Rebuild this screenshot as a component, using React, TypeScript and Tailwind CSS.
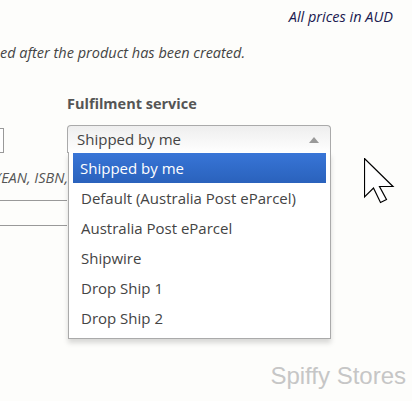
const options = [
  "Shipped by me",
  "Default (Australia Post eParcel)",
  "Australia Post eParcel",
  "Shipwire",
  "Drop Ship 1",
  "Drop Ship 2",
];

const Cursor = () => (
  <svg width="32" height="48" viewBox="0 0 32 48" className="absolute left-[364px] top-[158px]">
    <path
      d="M0.5 0.5 L0.5 39 L9.5 30 L16.5 44.5 L22.5 41.5 L15.5 28.5 L29 28.5 Z"
      fill="#fff"
      stroke="#000"
      strokeWidth="1.2"
      strokeLinejoin="miter"
    />
  </svg>
);

export default function App() {
  return (
    <div className="relative h-[401px] w-[412px] overflow-hidden bg-[#fdfdfb] font-['Open_Sans',sans-serif]">
      <div className="flex justify-end pr-[19px] pt-[8px]">
        <p className="text-[14.5px] leading-[18px] italic text-[#1a1a50]">All prices in AUD</p>
      </div>
      <p className="mt-[18px] text-[14.5px] leading-[18px] italic text-[#444]">
        ed after the product has been created.
      </p>

      <div className="mt-[33px] flex">
        {/* left column, cut off by the edge of the shot */}
        <div className="w-[67px] shrink-0 overflow-hidden pt-[33px]">
          <div className="h-[25px] w-[4px] border border-l-0 border-[#999] bg-white" />
          <p className="-ml-[3px] mt-[16px] whitespace-nowrap text-[14.5px] leading-[18px] italic text-[#555]">
            (EAN, ISBN,
          </p>
          <div className="mt-[13px] h-[26px] border-y border-[#999]" />
        </div>

        <div className="relative">
          <p className="text-[14.5px] leading-[18px] font-bold text-[#555]">Fulfilment service</p>
          <div className="mt-[12px] flex h-[28px] w-[264px] items-center justify-between rounded-t-[4px] border border-b-0 border-[#aaa] bg-gradient-to-b from-[#eee] to-white pl-[9px] pr-[11px]">
            <span className="text-[15px] text-[#444]">Shipped by me</span>
            <span className="h-0 w-0 border-x-[5px] border-b-[6px] border-x-transparent border-b-[#999]" />
          </div>

          <ul className="absolute left-[1px] top-[57px] w-[263px] border border-t-0 border-[#aaa] bg-white pb-[5px] pt-[1px] shadow-[0_4px_5px_rgba(0,0,0,0.15)]">
            {options.map((o, i) => (
              <li
                key={o}
                className={
                  i === 0
                    ? "mx-[4px] h-[30px] bg-gradient-to-b from-[#3875d7] to-[#2a62bc] pl-[7px] text-[15px] leading-[30px] text-white"
                    : "mx-[4px] h-[30px] pl-[8px] text-[15px] leading-[30px] text-[#444]"
                }
              >
                {o}
              </li>
            ))}
          </ul>
        </div>
      </div>

      <Cursor />

      <p className="absolute bottom-[11px] right-[6px] font-['Liberation_Sans',sans-serif] text-[24px] leading-[28px] text-[#c6c6c6]">
        Spiffy Stores
      </p>
    </div>
  );
}
